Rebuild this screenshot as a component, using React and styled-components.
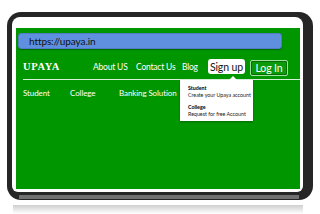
import React from "react";
import styled, { createGlobalStyle } from "styled-components";

const Global = createGlobalStyle`
  html, body { margin: 0; padding: 0; background: #ffffff; }
  #root { width: 320px; height: 214px; overflow: hidden; }
`;

const Stage = styled.div`
  width: 320px;
  height: 214px;
  box-sizing: border-box;
  padding: 12px 0 0 7px;
  background: #ffffff;
  font-family: "Lato", "Open Sans", sans-serif;
  white-space: nowrap;
`;

const Device = styled.div`
  position: relative;
  width: 306px;
  height: 188px;
  box-sizing: border-box;
  padding: 5px 10px 8px 5px;
  background: #262626;
  border-radius: 14px;
  &::after {
    content: "";
    position: absolute;
    left: 12px;
    right: 14px;
    bottom: 1px;
    height: 4px;
    background: #707070;
  }
`;

const Bezel = styled.div`
  height: 100%;
  box-sizing: border-box;
  padding: 11px 3px 3px 4px;
  background: #ffffff;
  border-radius: 8px 8px 6px 6px;
`;

const Screen = styled.div`
  position: relative;
  height: 100%;
  box-sizing: border-box;
  background: #009600;
  padding: 5px 18px 0 2px;
  display: flex;
  flex-direction: column;
`;

const UrlBar = styled.div`
  height: 16px;
  box-sizing: border-box;
  background: #5f90e0;
  border: 1px solid #4f7cc4;
  border-radius: 3px;
  box-shadow: 0 1px 1px rgba(0, 0, 0, 0.3);
  padding-left: 10px;
  display: flex;
  align-items: center;
  font-size: 10px;
  letter-spacing: -0.1px;
  color: #111;
`;

const Nav = styled.div`
  display: flex;
  align-items: center;
  height: 25px;
  padding-top: 5px;
  margin: 0 -18px 0 5px;
  border-bottom: 1.5px solid #d9f0d9;
`;

const Logo = styled.div`
  flex: none;
  font-family: "Liberation Serif", serif;
  font-weight: bold;
  font-size: 10.5px;
  letter-spacing: 0.6px;
  color: #ffffff;
  width: 70px;
`;

const NavLink = styled.span`
  flex: none;
  width: ${(p) => p.$w}px;
  font-size: 8.5px;
  letter-spacing: -0.2px;
  color: #ffffff;
`;

const SignUp = styled.div`
  flex: none;
  width: 37px;
  height: 15px;
  box-sizing: border-box;
  background: #ffffff;
  border-radius: 3px;
  display: flex;
  align-items: center;
  justify-content: center;
  font-size: 10.5px;
  letter-spacing: -0.1px;
  color: #111;
  margin-right: 5px;
`;

const LogIn = styled.div`
  flex: none;
  width: 38px;
  height: 16px;
  margin-top: 2px;
  box-sizing: border-box;
  background: #0a9a0a;
  border: 1px solid #9ee09e;
  border-radius: 2px;
  box-shadow: inset 0 0 0 1px #066d06;
  display: flex;
  align-items: center;
  justify-content: center;
  font-size: 10.5px;
  letter-spacing: -0.1px;
  color: #ffffff;
`;

const SubNav = styled.div`
  display: flex;
  align-items: center;
  height: 26px;
  margin-left: 5px;
`;

const SubLink = styled.span`
  flex: none;
  font-size: 8px;
  letter-spacing: -0.1px;
  color: #ffffff;
  width: ${(p) => p.$w}px;
`;

const Menu = styled.div`
  position: absolute;
  left: 164px;
  top: 52px;
  width: 73px;
  height: 41px;
  box-sizing: border-box;
  background: #ffffff;
  box-shadow: 0 1px 2px rgba(0, 0, 0, 0.3);
  padding: 5px 0 0 8px;
  display: flex;
  flex-direction: column;
  gap: 5px;
  &::before {
    content: "";
    position: absolute;
    top: -4px;
    left: 49px;
    border-left: 4px solid transparent;
    border-right: 4px solid transparent;
    border-bottom: 4px solid #ffffff;
  }
`;

const MenuItem = styled.div`
  font-size: 5.3px;
  line-height: 7px;
  color: #222;
  b { display: block; font-weight: bold; color: #000; }
`;

const Reflection = styled.div`
  margin: 5px 0 0 6px;
  width: 290px;
  height: 9px;
  background: linear-gradient(#cfcfcf, #ffffff);
`;

export default function App() {
  return (
    <Stage>
      <Global />
      <Device>
        <Bezel>
          <Screen>
            <UrlBar>https://upaya.in</UrlBar>
            <Nav>
              <Logo>UPAYA</Logo>
              <NavLink $w={43}>About US</NavLink>
              <NavLink $w={46}>Contact Us</NavLink>
              <NavLink $w={26}>Blog</NavLink>
              <SignUp>Sign up</SignUp>
              <LogIn>Log In</LogIn>
            </Nav>
            <SubNav>
              <SubLink $w={47}>Student</SubLink>
              <SubLink $w={49}>College</SubLink>
              <SubLink $w={70}>Banking Solution</SubLink>
            </SubNav>
            <Menu>
              <MenuItem>
                <b>Student</b>
                Create your Upaya account
              </MenuItem>
              <MenuItem>
                <b>College</b>
                Request for free Account
              </MenuItem>
            </Menu>
          </Screen>
        </Bezel>
      </Device>
      <Reflection />
    </Stage>
  );
}
